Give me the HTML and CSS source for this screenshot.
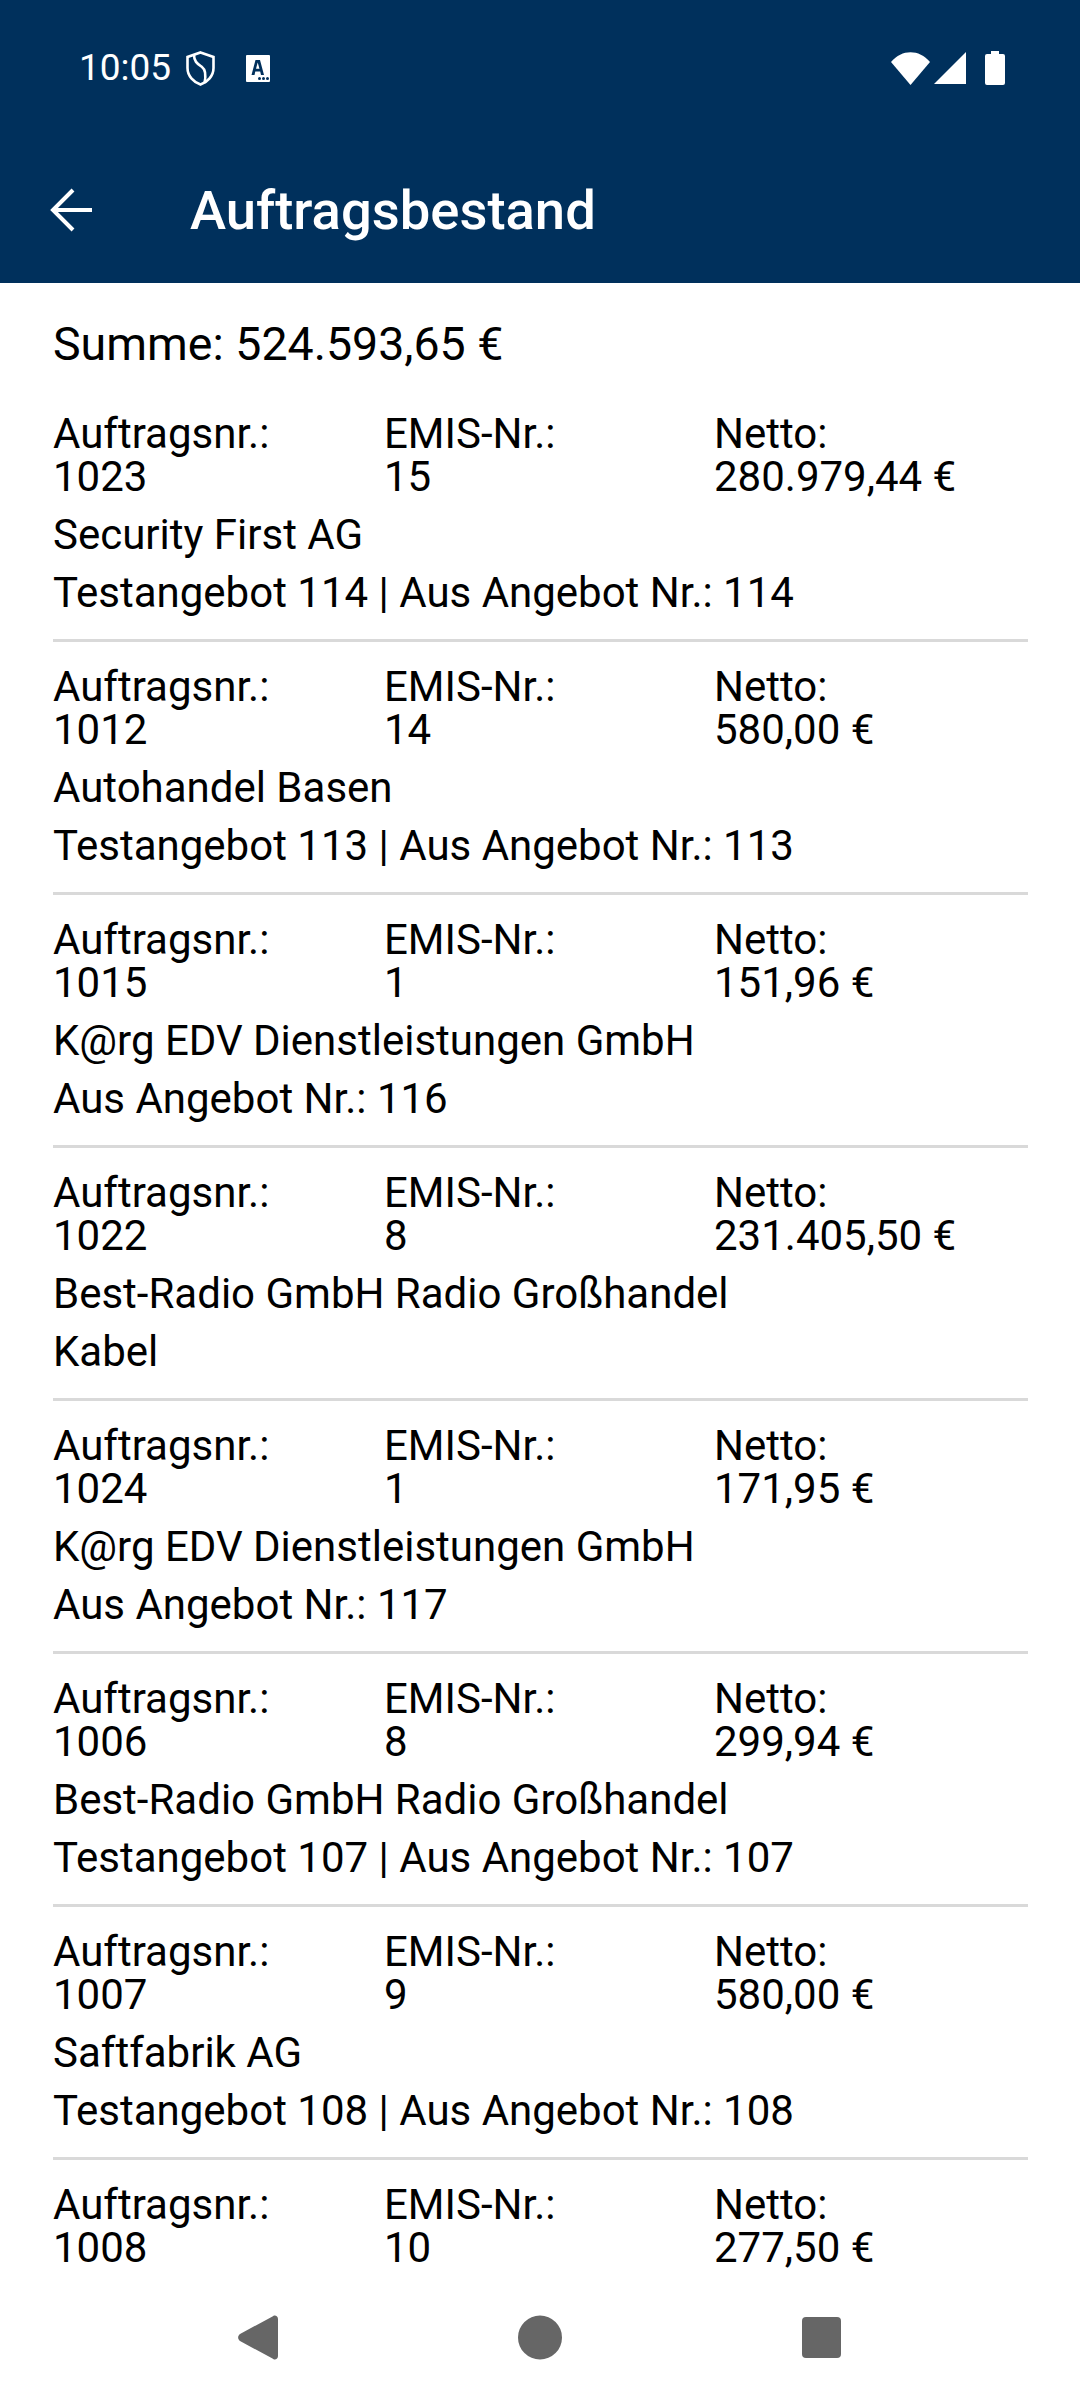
FILE: index.html
```html
<!DOCTYPE html>
<html lang="de">
<head>
    <meta charset="UTF-8">
    <meta name="viewport" content="width=device-width, initial-scale=1.0">
    <title>Auftragsbestand</title>
    <link rel="stylesheet" href="styles.css">
</head>
<body>
    <header class="app-header">
        <div class="status-bar">
            <span class="clock">10:05</span>
            <svg class="shield" viewBox="0 0 29 35" width="29" height="35">
                <path d="M14.5 1.5 L27.5 6 V17 C27.5 25 21.5 31 14.5 33.5 C7.5 31 1.5 25 1.5 17 V6 Z" fill="none" stroke="#fff" stroke-width="2.6"/>
                <path d="M8 4 C8 11 12 13 16 16 C20 19 20 25 18.5 32" fill="none" stroke="#fff" stroke-width="2.6"/>
            </svg>
            <svg class="a-icon" viewBox="0 0 24 27" width="24" height="27">
                <path fill-rule="evenodd" fill="#fff" d="M1 0 H23 A1 1 0 0 1 24 1 V26 A1 1 0 0 1 23 27 H1 A1 1 0 0 1 0 26 V1 A1 1 0 0 1 1 0 Z M9.5 5 L5.5 20 H8.5 L9.3 16.5 H14.2 L15 20 H18 L14 5 Z M10 13.8 L11.7 7.5 L13.5 13.8 Z"/>
                <circle cx="13.5" cy="23.5" r="1.5" fill="#00305c"/>
                <circle cx="17.5" cy="23.5" r="1.5" fill="#00305c"/>
                <circle cx="21.5" cy="23.5" r="1.5" fill="#00305c"/>
            </svg>
            <div class="status-right">
                <svg viewBox="0 0 39 33" width="39" height="33">
                    <path fill="#fff" d="M0 10 C11 -3 28 -3 39 10 L19.5 33 Z"/>
                </svg>
                <svg viewBox="0 0 32 32" width="32" height="32">
                    <path fill="#fff" d="M32 0 V32 H0 Z"/>
                </svg>
                <svg class="battery" viewBox="0 0 20 34" width="20" height="34">
                    <path fill="#fff" d="M6 0 H14 V3 H18 A2 2 0 0 1 20 5 V32 A2 2 0 0 1 18 34 H2 A2 2 0 0 1 0 32 V5 A2 2 0 0 1 2 3 H6 Z"/>
                </svg>
            </div>
        </div>
        <div class="toolbar">
            <svg class="back" viewBox="0 0 42 44" width="42" height="44">
                <path d="M42 22 H4 M23 2 L3 22 L23 42" fill="none" stroke="#fff" stroke-width="4"/>
            </svg>
            <h1>Auftragsbestand</h1>
        </div>
    </header>

    <main class="content">
        <p class="sum">Summe: 524.593,65 €</p>

        <div class="order">
            <div class="order-cols">
                <div>Auftragsnr.:<br>1023</div>
                <div>EMIS-Nr.:<br>15</div>
                <div>Netto:<br>280.979,44 €</div>
            </div>
            <p>Security First AG</p>
            <p>Testangebot 114 | Aus Angebot Nr.: 114</p>
        </div>
        <div class="order">
            <div class="order-cols">
                <div>Auftragsnr.:<br>1012</div>
                <div>EMIS-Nr.:<br>14</div>
                <div>Netto:<br>580,00 €</div>
            </div>
            <p>Autohandel Basen</p>
            <p>Testangebot 113 | Aus Angebot Nr.: 113</p>
        </div>
        <div class="order">
            <div class="order-cols">
                <div>Auftragsnr.:<br>1015</div>
                <div>EMIS-Nr.:<br>1</div>
                <div>Netto:<br>151,96 €</div>
            </div>
            <p>K@rg EDV Dienstleistungen GmbH</p>
            <p>Aus Angebot Nr.: 116</p>
        </div>
        <div class="order">
            <div class="order-cols">
                <div>Auftragsnr.:<br>1022</div>
                <div>EMIS-Nr.:<br>8</div>
                <div>Netto:<br>231.405,50 €</div>
            </div>
            <p>Best-Radio GmbH Radio Großhandel</p>
            <p>Kabel</p>
        </div>
        <div class="order">
            <div class="order-cols">
                <div>Auftragsnr.:<br>1024</div>
                <div>EMIS-Nr.:<br>1</div>
                <div>Netto:<br>171,95 €</div>
            </div>
            <p>K@rg EDV Dienstleistungen GmbH</p>
            <p>Aus Angebot Nr.: 117</p>
        </div>
        <div class="order">
            <div class="order-cols">
                <div>Auftragsnr.:<br>1006</div>
                <div>EMIS-Nr.:<br>8</div>
                <div>Netto:<br>299,94 €</div>
            </div>
            <p>Best-Radio GmbH Radio Großhandel</p>
            <p>Testangebot 107 | Aus Angebot Nr.: 107</p>
        </div>
        <div class="order">
            <div class="order-cols">
                <div>Auftragsnr.:<br>1007</div>
                <div>EMIS-Nr.:<br>9</div>
                <div>Netto:<br>580,00 €</div>
            </div>
            <p>Saftfabrik AG</p>
            <p>Testangebot 108 | Aus Angebot Nr.: 108</p>
        </div>
        <div class="order">
            <div class="order-cols">
                <div>Auftragsnr.:<br>1008</div>
                <div>EMIS-Nr.:<br>10</div>
                <div>Netto:<br>277,50 €</div>
            </div>
        </div>
    </main>

    <nav class="nav-bar">
        <svg viewBox="0 0 40 45" width="40" height="45">
            <path fill="#666" d="M36 0.5 C38 0 40 1.5 40 4 V41 C40 43.5 38 45 36 44.5 C35.5 44.4 35 44 34.5 43.6 L2 26 C-0.5 24 -0.5 21 2 19 L34.5 1.4 Z"/>
        </svg>
        <svg viewBox="0 0 44 45" width="44" height="45">
            <circle cx="22" cy="22.5" r="22" fill="#666"/>
        </svg>
        <div class="nav-square"></div>
    </nav>
</body>
</html>
```

FILE: styles.css
```css
html, body {
    height: 100%;
}
body {
    display: flex;
    flex-direction: column;
    height: 2400px;
    margin: 0;
    overflow: hidden;
    background-color: #fff;
    color: #000;
    font-family: Roboto, sans-serif;
}
.app-header {
    height: 283px;
    flex-shrink: 0;
    background: #00305c;
    color: white;
}
.status-bar {
    display: flex;
    align-items: center;
    height: 68px;
    padding: 34px 75px 0 79px;
}
.clock {
    font-size: 37px;
    line-height: 44px;
}
.shield {
    margin-left: 15px;
}
.a-icon {
    margin-left: 31px;
}
.status-right {
    display: flex;
    align-items: center;
    gap: 4px;
    margin-left: auto;
}
.battery {
    margin-left: 15px;
}
.toolbar {
    display: flex;
    align-items: center;
    height: 74px;
    margin-top: 71px;
    padding-left: 50px;
}
.toolbar h1 {
    margin: 0 0 0 98px;
    font-size: 54.4px;
    font-weight: 500;
}
.content {
    flex: 1;
    min-height: 0;
    overflow: hidden;
    padding: 33px 52px 0 53px;
}
.sum {
    margin: 0;
    font-size: 46.5px;
    line-height: 56px;
}
.order {
    padding: 40px 0 25px;
    border-bottom: 3px solid #d9d9d9;
    font-size: 42px;
    line-height: 43px;
}
.order + .order {
    padding-top: 23px;
}
.order:last-child {
    border-bottom: none;
}
.order p {
    margin: 15px 0 0;
}
.order-cols {
    display: grid;
    grid-template-columns: 331px 330px 1fr;
}
.nav-bar {
    display: flex;
    align-items: center;
    height: 126px;
    flex-shrink: 0;
    padding-left: 238px;
    gap: 240px;
    background: #fff;
}
.nav-square {
    width: 39px;
    height: 41px;
    border-radius: 4px;
    background: #666;
}
```
